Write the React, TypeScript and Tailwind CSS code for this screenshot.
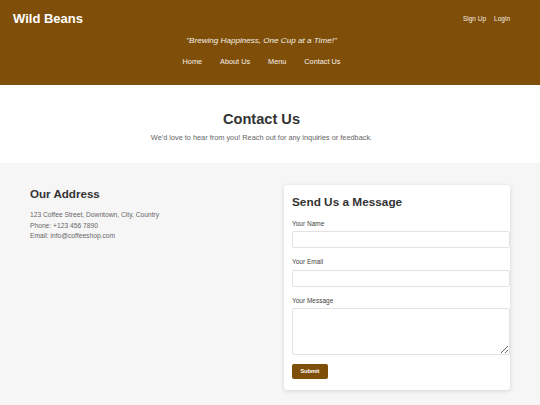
const navLinks = ['Home', 'About Us', 'Menu', 'Contact Us'];

const addressLines = [
  '123 Coffee Street, Downtown, City, Country',
  'Phone: +123 456 7890',
  'Email: info@coffeeshop.com',
];

function Header() {
  return (
    <header className="h-[85px] bg-[#7f4f0a] text-white pt-[10px]">
      <div className="flex items-center justify-between h-[17px] pl-[13px] pr-[30px]">
        <h1 className="text-[13px] leading-[17px] font-bold">Wild Beans</h1>
        <div className="flex gap-[8px] text-[6.5px] leading-[10px] pt-[1px] text-[#f3ece2]">
          <a>Sign Up</a>
          <a>Login</a>
        </div>
      </div>
      <div className="pr-[17px]">
        <p className="mt-[9px] text-center italic text-[8.1px] leading-[10px] text-[#f5efe6]">
          "Brewing Happiness, One Cup at a Time!"
        </p>
        <nav className="mt-[11px] flex justify-center gap-[18px] text-[7.3px] leading-[10px] text-[#f7f2ea]">
          {navLinks.map((l) => (
            <a key={l}>{l}</a>
          ))}
        </nav>
      </div>
    </header>
  );
}

function Field({ label, area }: { label: string; area?: boolean }) {
  return (
    <div className="mb-[9px]">
      <label className="block text-[6.5px] leading-[9px] text-[#444] mb-[3.3px]">{label}</label>
      {area ? (
        <textarea className="block w-[218px] h-[47px] border border-[#e2e2e2] rounded-[2px] bg-white resize-y" />
      ) : (
        <input className="block w-[218px] h-[17.5px] border border-[#e2e2e2] rounded-[2px] bg-white" />
      )}
    </div>
  );
}

export default function App() {
  return (
    <div className="w-[540px] h-[405px] overflow-hidden bg-[#f6f6f6] font-['Liberation_Sans',Arial,sans-serif]">
      <Header />

      {/* Hero */}
      <section className="h-[78px] bg-white pt-[25px] pr-[17px] text-center">
        <h2 className="text-[14.6px] leading-[18px] font-bold text-[#333]">Contact Us</h2>
        <p className="mt-[5px] text-[7.35px] leading-[10px] text-[#666]">
          We'd love to hear from you! Reach out for any inquiries or feedback.
        </p>
      </section>

      {/* Content */}
      <section className="grid grid-cols-[227px_226px] gap-[27px] px-[30px] pt-[22px]">
        <div>
          <h3 className="text-[11.6px] leading-[17px] font-bold text-[#333]">Our Address</h3>
          <div className="mt-[8px] text-[6.7px] leading-[10.7px] text-[#666]">
            {addressLines.map((l) => (
              <p key={l}>{l}</p>
            ))}
          </div>
        </div>

        <div className="bg-white rounded-[3px] shadow-[0_1px_4px_rgba(0,0,0,0.14)] pl-[8px] pt-[9px] pb-[9px] h-[205px]">
          <h3 className="text-[11.8px] leading-[16px] font-bold text-[#333] mb-[8.5px]">Send Us a Message</h3>
          <Field label="Your Name" />
          <Field label="Your Email" />
          <Field label="Your Message" area />
          <button className="block mt-[3px] w-[36px] h-[14.5px] rounded-[2px] bg-[#7f4f0a] text-white text-[5.6px] leading-[14.5px] font-bold">
            Submit
          </button>
        </div>
      </section>
    </div>
  );
}
